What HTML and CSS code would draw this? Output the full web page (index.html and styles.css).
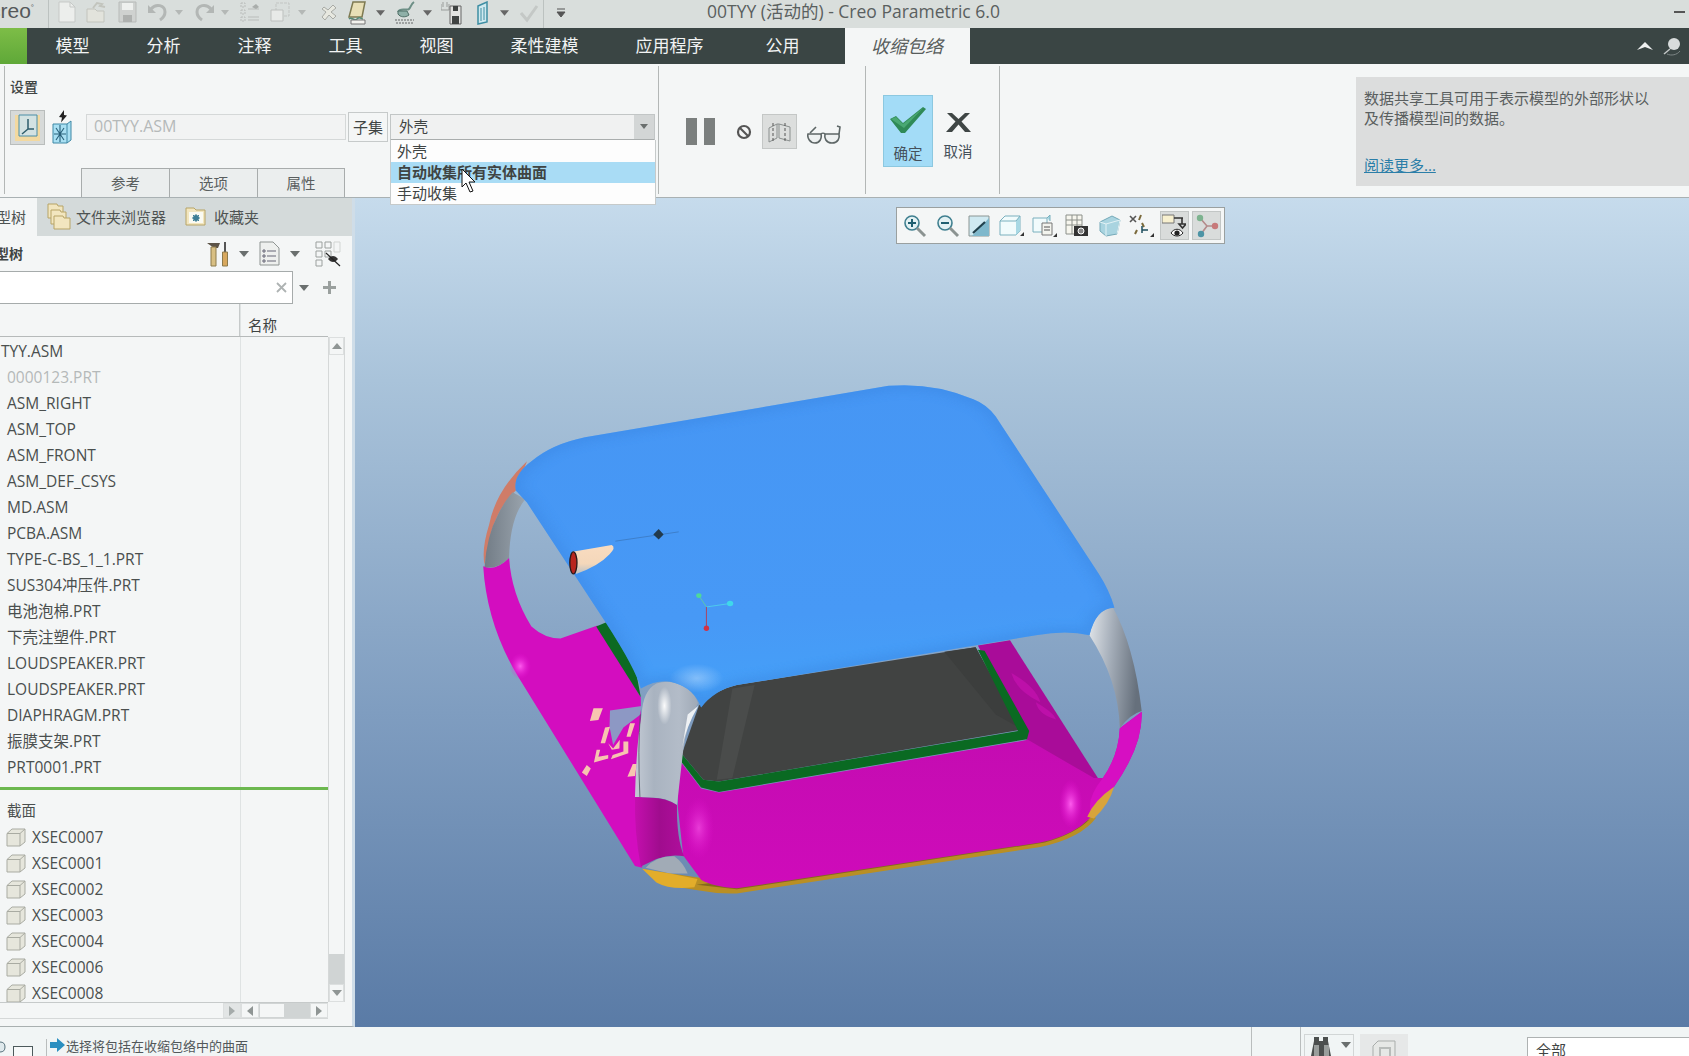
FILE: index.html
```html
<!DOCTYPE html>
<html lang="zh">
<head>
<meta charset="utf-8">
<title>00TYY (活动的) - Creo Parametric 6.0</title>
<link rel="stylesheet" href="styles.css">
</head>
<body>
<svg class="defs" width="0" height="0">
  <defs>
    <symbol id="arrow" viewBox="0 0 10 6"><path d="M0 0h10L5 6z" fill="currentColor"/></symbol>
    <symbol id="cube" viewBox="0 0 20 20">
      <path d="M1 6.500L6 2h13v13l-5 4H1z" fill="#e6e6dc" stroke="#a9aba2"/>
      <path d="M1 6.500h13V19M14 6.500L19 2" fill="none" stroke="#a9aba2"/>
    </symbol>
  </defs>
</svg>
<div class="app">
  <header class="titlebar">
    <span class="logo">creo<sup class="logo-mark">°</sup></span>
    <i class="vsep first"></i>
    <div class="quick">
      <svg width="28" height="24" viewBox="0 0 28 24"><path d="M1 1h11l5 5v15H1z" fill="#eceeec" stroke="#c6c9c7"/><path d="M12 1v5h5" fill="none" stroke="#c6c9c7"/></svg>
      <svg width="32" height="24" viewBox="0 0 32 24"><path d="M1 8h8l2 2h7v11H1z" fill="#e2e3dc" stroke="#c2c4bd"/><path d="M7 7l4-5 5 1-2 2 5 1" fill="none" stroke="#c2c4bd" stroke-width="2"/></svg>
      <svg width="29" height="24" viewBox="0 0 29 24"><path d="M1 1h17v20H1z" fill="#cfd2d0" stroke="#b8bbb9"/><path d="M4 2h11v7H4z" fill="#eef0ee"/><path d="M5 14h9v7H5z" fill="#aeb1af"/></svg>
      <svg width="28" height="24" viewBox="0 0 28 24"><path d="M4 8c5-6 14-4 14 3 0 3-2 6-5 8" fill="none" stroke="#b3b7b5" stroke-width="3"/><path d="M1 4v8h8z" fill="#b3b7b5"/></svg>
      <svg class="qarrow" width="20" height="24" viewBox="0 0 20 24"><use href="#arrow" x="0" y="9" width="8" height="5"/></svg>
      <svg width="26" height="24" viewBox="0 0 26 24"><path d="M16 8c-5-6-14-4-14 3 0 3 2 6 5 8" fill="none" stroke="#b3b7b5" stroke-width="3"/><path d="M19 4v8h-8z" fill="#b3b7b5"/></svg>
      <svg class="qarrow" width="19" height="24" viewBox="0 0 19 24"><use href="#arrow" x="0" y="9" width="8" height="5"/></svg>
      <svg width="29" height="24" viewBox="0 0 29 24"><g fill="none" stroke="#b9bcba"><path d="M1 2h4v4H1zM1 9h4v4H1zM1 16h4v4H1z" stroke-dasharray="2 1"/><path d="M8 8h11M8 16h11M8 19h11" /></g><path d="M12 6l4-3 3 3-3 2z" fill="#a9adab"/></svg>
      <svg width="29" height="24" viewBox="0 0 29 24"><path d="M7 2h13v13H7z" fill="none" stroke="#c2c5c3" stroke-dasharray="3 1"/><path d="M2 9h12v11H2z" fill="#e8eae8" stroke="#bdc0be"/></svg>
      <svg class="qarrow" width="23" height="24" viewBox="0 0 23 24"><use href="#arrow" x="0" y="9" width="8" height="5"/></svg>
      <svg width="26" height="24" viewBox="0 0 26 24"><path d="M3 6l4 3 5-5 3 3-5 4 5 4-3 3-4-4-4 5-3-3 4-5-4-3z" fill="#e7e8e0" stroke="#a8aaa5"/></svg>
      <svg width="29" height="24" viewBox="0 0 29 24"><path d="M6 1h12l-3 15H2z" fill="#e8dfb6" stroke="#7e7a52" stroke-width="1.500"/><path d="M2 18c3-3 5 3 8 0s4 0 6 0" fill="none" stroke="#558a77" stroke-width="1.500"/><path d="M4 19h14v4H4z" fill="#f3f3ee" stroke="#777"/></svg>
      <svg class="qarrow dark" width="19" height="24" viewBox="0 0 19 24"><use href="#arrow" x="0" y="9" width="9" height="6"/></svg>
      <svg width="28" height="24" viewBox="0 0 28 24"><path d="M3 11c2-5 9-1 11-3s2-5 5-7" fill="none" stroke="#6d8f86" stroke-width="2"/><path d="M3 10h9l2 4c-4 3-9 2-11-1z" fill="#8fb0a8" stroke="#4f6e66"/><path d="M0 19h19M1 22h18" stroke="#8a8f8d" stroke-width="1.500" stroke-dasharray="2 1"/></svg>
      <svg class="qarrow dark" width="18" height="24" viewBox="0 0 18 24"><use href="#arrow" x="0" y="9" width="9" height="6"/></svg>
      <svg width="33" height="24" viewBox="0 0 33 24"><path d="M0 3v6h8V3M2 1v5M6 1v5" fill="none" stroke="#9a9d9b"/><path d="M9 5h11v18H9z" fill="#e2e3e1" stroke="#666"/><path d="M12 5h5v5h-5zM11 15h7v8h-7z" fill="#3f4342"/></svg>
      <svg width="26" height="24" viewBox="0 0 26 24"><path d="M4 5l9-4v20l-9 2z" fill="#cfe9ef" stroke="#3e8ea3" stroke-width="1.500"/><path d="M7 7v13M10 6v13" stroke="#3e8ea3"/></svg>
      <svg class="qarrow dark" width="20" height="24" viewBox="0 0 20 24"><use href="#arrow" x="0" y="9" width="9" height="6"/></svg>
      <svg width="23" height="24" viewBox="0 0 23 24"><path d="M1 12l6 7L17 5" fill="none" stroke="#c4c8c6" stroke-width="3"/></svg>
      <i class="vsep"></i>
      <svg class="qmore" width="10" height="24" viewBox="0 0 10 24"><path d="M1 8h8M1 11h8l-4 5z" fill="#555" stroke="#555"/></svg>
    </div>
    <h1 class="wintitle">00TYY (活动的) - Creo Parametric 6.0</h1>
    <span class="minimize"></span>
  </header>

  <nav class="tabbar">
    <span class="file-tab"></span>
    <span class="tab">模型</span>
    <span class="tab">分析</span>
    <span class="tab">注释</span>
    <span class="tab">工具</span>
    <span class="tab">视图</span>
    <span class="tab">柔性建模</span>
    <span class="tab">应用程序</span>
    <span class="tab tab-util">公用</span>
    <span class="tab tab-active">收缩包络</span>
    <div class="tab-tools">
      <svg width="16" height="10" viewBox="0 0 16 10"><path d="M0 9L8 1l8 8-8-3z" fill="#eef0f0"/></svg>
      <svg width="22" height="24" viewBox="0 0 22 24"><circle cx="12" cy="10" r="6" fill="#d8dcdc"/><path d="M8 15l-6 5" stroke="#c2c7c7" stroke-width="1.500"/><path d="M5 20c4 2 10 1 13-3" fill="none" stroke="#7d8686"/></svg>
    </div>
  </nav>

  <section class="ribbon">
    <div class="group group-settings">
      <div class="group-title">设置</div>
      <div class="controls">
        <span class="toggle">
          <svg width="27" height="29" viewBox="0 0 27 29"><path d="M1 2h25v26H1z" fill="#f3d9a0"/><path d="M5 2h18v21H5z" fill="#d3e2e2" stroke="#4a8ea6"/><path d="M14 6v10M14 16h6M14 16l-6 5" fill="none" stroke="#2f5e6c" stroke-width="1.500"/></svg>
        </span>
        <svg class="solid-icon" width="20" height="34" viewBox="0 0 20 34"><path d="M1 14h14l4-3v19l-4 3H1z" fill="#a9e0f3" stroke="#3f88a5"/><path d="M15 14v19" stroke="#3f88a5"/><path d="M4 18l8 12M12 18l-8 12M8 15v17M2 24h12" stroke="#29617a" stroke-width="1.100"/><path d="M12 0l-5 7 3 .500-1 5 6-7-3-.500z" fill="#222"/></svg>
        <span class="field">00TYY.ASM</span>
        <span class="subset">子集</span>
        <span class="select">外壳<span class="select-btn"><svg width="8" height="5"><use href="#arrow" width="8" height="5"/></svg></span></span>
      </div>
      <div class="subtabs">
        <span class="subtab">参考</span>
        <span class="subtab">选项</span>
        <span class="subtab">属性</span>
      </div>
      <ul class="dropdown">
        <li>外壳</li>
        <li class="dd-on">自动收集所有实体曲面</li>
        <li>手动收集</li>
      </ul>
      <svg class="cursor" width="15" height="25" viewBox="0 0 15 25"><path d="M1 1v18l4-4 4 9 3-1-4-9h6z" fill="#fff" stroke="#111"/></svg>
    </div>

    <div class="group group-tools">
      <span class="pause"><i></i><i></i></span>
      <svg class="ban" width="16" height="16" viewBox="0 0 16 16"><circle cx="8" cy="8" r="6" fill="none" stroke="#555" stroke-width="2.200"/><path d="M4 4l8 8" stroke="#555" stroke-width="2.200"/></svg>
      <span class="preview-box">
        <svg width="28" height="24" viewBox="0 0 28 24"><g fill="none" stroke="#8a8f8e"><path d="M3 8l8-4v14l-8 4zM13 4l11 3v14l-11-3zM11 4l2 0"/><path d="M7 3v18M19 3v18" stroke="#555" stroke-dasharray="3 2"/></g></svg>
      </span>
      <svg class="glasses" width="35" height="19" viewBox="0 0 35 19"><g fill="#eef1f1" stroke="#5d6666" stroke-width="1.600"><path d="M1 9h13c1 4-1 9-6 9S0 13 1 9z"/><path d="M18 9h14c1 4-1 9-7 9s-8-5-7-9z"/></g><path d="M14 9c1-1 3-1 4 0M3 8l6-6M32 9l1-7-3-1" fill="none" stroke="#5d6666" stroke-width="1.600"/></svg>
    </div>

    <div class="group group-confirm">
      <button class="ok">
        <svg width="36" height="26" viewBox="0 0 36 26"><path d="M0 12l6-3 7 7L33 0l3 2-21 24h-4z" fill="#2f8a57"/><path d="M1 12l5-2 7 7L33 1 14 21z" fill="#49a873"/></svg>
        <span>确定</span>
      </button>
      <button class="cancel">
        <svg width="25" height="19" viewBox="0 0 25 19"><path d="M1 0h5l6.500 6L19 0h5l-8.500 8.500L25 19h-6l-6.500-7.500L6 19H0l9.500-10.500z" fill="#3f4645"/></svg>
        <span>取消</span>
      </button>
    </div>

    <div class="group group-info">
      <aside class="info">
        <p>数据共享工具可用于表示模型的外部形状以<br>及传播模型间的数据。</p>
        <a class="more">阅读更多...</a>
      </aside>
    </div>
  </section>

  <main class="main">
    <aside class="panel">
      <div class="panel-tabs">
        <span class="ptab ptab-active"><span class="clip-l">模型树</span></span>
        <span class="ptab">
          <svg width="24" height="30" viewBox="0 0 24 30"><g fill="#f2e6bf" stroke="#b7a467"><path d="M1 3h9l1 2h5v12H1z"/><path d="M4 9h9l1 2h5v12H4z"/><path d="M7 15h9l1 2h6v11H7z"/></g></svg>
          文件夹浏览器
        </span>
        <span class="ptab ptab-fav">
          <svg width="21" height="20" viewBox="0 0 21 20"><path d="M1 2h8l2 2h9v15H1z" fill="#f2e6bf" stroke="#b7a467"/><path d="M4 6h14v11H4z" fill="#fafaf2"/><circle cx="11" cy="12" r="3" fill="#3e7f96"/><path d="M11 8v8M7 12h8M8 9l6 6M14 9l-6 6" stroke="#3e7f96"/></svg>
          收藏夹
        </span>
      </div>
      <div class="tree-tools">
        <span class="tree-title"><span class="clip-l">模型树</span></span>
        <div class="tree-icons">
          <svg width="22" height="26" viewBox="0 0 22 26"><path d="M0 2h13l-2 5H7z" fill="#5c5347"/><path d="M4 6h5v19H4z" fill="#d8bf83" stroke="#8c7a4c"/><path d="M17 1h2v10h-2z" fill="#555"/><path d="M15.500 11h5v14h-5z" fill="#d8a85e" stroke="#8c7a4c"/></svg>
          <svg class="small" width="10" height="6"><use href="#arrow" width="10" height="6"/></svg>
          <svg width="21" height="25" viewBox="0 0 21 25"><path d="M1 1h13l6 6v17H1z" fill="#eef0ee" stroke="#8e9492"/><path d="M4 9h2v2H4zM8 10h9M4 14h2v2H4zM8 15h9M4 19h2v2H4zM8 20h9" fill="none" stroke="#667"/></svg>
          <svg class="small" width="10" height="6"><use href="#arrow" width="10" height="6"/></svg>
          <svg class="tree-vis" width="27" height="26" viewBox="0 0 27 26"><g fill="none" stroke="#9ba09e"><path d="M1 1h6v6H1zM1 10h6v6H1zM1 19h6v6H1zM10 10h6v6h-6zM10 1h6v6h-6z"/><path d="M19 1h6v10h-6z" stroke="#d2d5d3"/></g><path d="M13 18c3-4 7-4 10 0-3 4-7 4-10 0z" fill="#333"/><path d="M11 12l14 13" stroke="#222" stroke-width="1.200"/></svg>
        </div>
      </div>
      <div class="search-row">
        <div class="search"><svg width="11" height="11" viewBox="0 0 11 11"><path d="M1 1l9 9M10 1l-9 9" stroke="#aeb3b3" stroke-width="1.800"/></svg></div>
        <svg class="small" width="10" height="6"><use href="#arrow" width="10" height="6"/></svg>
        <svg class="plus" width="15" height="15" viewBox="0 0 15 15"><path d="M6 1h3v5h5v3H9v5H6V9H1V6h5z" fill="#9aa09e"/></svg>
      </div>
      <div class="tree">
        <div class="tree-main">
          <div class="tree-head"><span class="col-tree"></span><span class="col-name">名称</span></div>
          <ul class="rows">
            <li class="row row-first"><span>TYY.ASM</span></li>
            <li class="row row-dim"><span>0000123.PRT</span></li>
            <li class="row"><span>ASM_RIGHT</span></li>
            <li class="row"><span>ASM_TOP</span></li>
            <li class="row"><span>ASM_FRONT</span></li>
            <li class="row"><span>ASM_DEF_CSYS</span></li>
            <li class="row"><span>MD.ASM</span></li>
            <li class="row"><span>PCBA.ASM</span></li>
            <li class="row"><span>TYPE-C-BS_1_1.PRT</span></li>
            <li class="row"><span>SUS304冲压件.PRT</span></li>
            <li class="row"><span>电池泡棉.PRT</span></li>
            <li class="row"><span>下壳注塑件.PRT</span></li>
            <li class="row"><span>LOUDSPEAKER.PRT</span></li>
            <li class="row"><span>LOUDSPEAKER.PRT</span></li>
            <li class="row"><span>DIAPHRAGM.PRT</span></li>
            <li class="row"><span>振膜支架.PRT</span></li>
            <li class="row"><span>PRT0001.PRT</span></li>
            <li class="insert-line"></li>
            <li class="row row-sec"><span>截面</span></li>
            <li class="row row-x"><svg width="20" height="20"><use href="#cube"/></svg><span>XSEC0007</span></li>
            <li class="row row-x"><svg width="20" height="20"><use href="#cube"/></svg><span>XSEC0001</span></li>
            <li class="row row-x"><svg width="20" height="20"><use href="#cube"/></svg><span>XSEC0002</span></li>
            <li class="row row-x"><svg width="20" height="20"><use href="#cube"/></svg><span>XSEC0003</span></li>
            <li class="row row-x"><svg width="20" height="20"><use href="#cube"/></svg><span>XSEC0004</span></li>
            <li class="row row-x"><svg width="20" height="20"><use href="#cube"/></svg><span>XSEC0006</span></li>
            <li class="row row-x"><svg width="20" height="20"><use href="#cube"/></svg><span>XSEC0008</span></li>
          </ul>
        </div>
        <div class="vscroll">
          <span class="sbtn"><svg width="10" height="6" viewBox="0 0 10 6"><path d="M5 0l5 6H0z" fill="#8f9594"/></svg></span>
          <span class="vthumb"></span>
          <span class="vtrack"></span>
          <span class="sbtn"><svg width="10" height="6" viewBox="0 0 10 6"><path d="M0 0h10L5 6z" fill="#8f9594"/></svg></span>
        </div>
      </div>
      <div class="hscroll">
        <span class="hbtn hbtn-grey"><svg width="6" height="10" viewBox="0 0 6 10"><path d="M0 0l6 5-6 5z" fill="#a5abaa"/></svg></span>
        <span class="hbtn"><svg width="6" height="10" viewBox="0 0 6 10"><path d="M6 0L0 5l6 5z" fill="#8f9594"/></svg></span>
        <span class="hthumb"></span>
        <span class="htrack"></span>
        <span class="hbtn"><svg width="6" height="10" viewBox="0 0 6 10"><path d="M0 0l6 5-6 5z" fill="#8f9594"/></svg></span>
      </div>
    </aside>

    <section class="viewport">
      <div class="view-tools">
        <svg width="24" height="24" viewBox="0 0 24 24"><circle cx="9" cy="9" r="7" fill="#e3f1f3" stroke="#3f7f8f" stroke-width="1.600"/><path d="M5 9h8M9 5v8" stroke="#1f5f70" stroke-width="2"/><path d="M14 14l8 8" stroke="#8b9391" stroke-width="3"/></svg>
        <svg width="24" height="24" viewBox="0 0 24 24"><circle cx="9" cy="9" r="7" fill="#e3f1f3" stroke="#3f7f8f" stroke-width="1.600"/><path d="M5 9h8" stroke="#1f5f70" stroke-width="2"/><path d="M14 14l8 8" stroke="#8b9391" stroke-width="3"/></svg>
        <svg width="24" height="24" viewBox="0 0 24 24"><path d="M1 2h20v20H1z" fill="#cfe9f1" stroke="#8c9694"/><path d="M21 4v18H4z" fill="#7fb8cc"/><path d="M5 19L17 8" stroke="#20404c" stroke-width="2.200"/></svg>
        <svg width="26" height="24" viewBox="0 0 26 24"><path d="M1 7l5-5h15v15l-4 4H1z" fill="#f1fbfc" stroke="#7ab0be"/><path d="M17 7v14l4-4V2z" fill="#a8d8e4"/><path d="M1 7h16l4-5" fill="none" stroke="#7ab0be"/><path d="M25 18v4h-4z" fill="#333"/></svg>
        <svg width="26" height="24" viewBox="0 0 26 24"><path d="M1 4h14v14H1z" fill="#f1fbfc" stroke="#7ab0be"/><path d="M15 4l3-3v6" fill="#a8d8e4" stroke="#7ab0be"/><path d="M10 9h10v12H10z" fill="#f3f4ee" stroke="#777"/><path d="M12 13h6M12 16h6" stroke="#555"/><path d="M25 19v4h-4z" fill="#333"/></svg>
        <svg width="24" height="24" viewBox="0 0 24 24"><path d="M1 1h16v19H1zM1 6h16M1 11h16M7 1v19M12 1v19" fill="#f7f6ee" stroke="#8c908a"/><path d="M9 12h14v10H9z" fill="#333"/><circle cx="16" cy="17" r="3" fill="#888" stroke="#fff"/></svg>
        <svg width="24" height="24" viewBox="0 0 24 24"><path d="M2 8l12-6 8 4-3 14-11 2-6-5z" fill="#a9d4e0" stroke="#74a9b8"/><path d="M8 10l14-4-3 14M8 10l0 12M8 10L2 8" fill="none" stroke="#e3f2f5"/></svg>
        <svg width="26" height="24" viewBox="0 0 26 24"><path d="M1 2l6 6M7 2L1 8" stroke="#555" stroke-width="1.600"/><g stroke="#7b6a3c" stroke-width="2" fill="none"><path d="M12 1l-2 5M13 9l2 4M6 20l2-4"/></g><path d="M13 12v7M13 16h6" stroke="#1d4d5e" stroke-width="1.500"/><path d="M25 19v4h-4z" fill="#333"/></svg>
        <span class="vt-on"><svg width="24" height="24" viewBox="0 0 24 24"><path d="M0 1h12v8H0z" fill="#f7f0cf" stroke="#777"/><path d="M12 4h9M20 4v6M17 10h7l-3.500 4z" fill="none" stroke="#333" stroke-width="1.600"/><path d="M9 19c3-5 9-5 12 0-3 4-9 4-12 0z" fill="#fff" stroke="#222"/><circle cx="15" cy="19" r="2.600" fill="#222"/></svg></span>
        <span class="vt-on"><svg width="24" height="24" viewBox="0 0 24 24"><path d="M5 4l7 8-6 8M12 12h8" fill="none" stroke="#b48a8a" stroke-width="1.600"/><circle cx="5" cy="4" r="3.200" fill="#7db38f"/><circle cx="20" cy="12" r="3.200" fill="#c7797a"/><circle cx="6" cy="20" r="3.200" fill="#4d94a5"/></svg></span>
      </div>

      <svg class="model" viewBox="0 0 1568 1568" preserveAspectRatio="none">
        <defs>
          <linearGradient id="blue" x1="0" y1="0" x2="0.1" y2="1"><stop offset="0" stop-color="#4696f4"/><stop offset="0.75" stop-color="#4799f6"/><stop offset="1" stop-color="#45a0f8"/></linearGradient>
          <linearGradient id="pillar" x1="0" y1="0" x2="1" y2="0"><stop offset="0" stop-color="#c3cad4"/><stop offset=".3" stop-color="#a9b3c0"/><stop offset=".7" stop-color="#b3bcc8"/><stop offset="1" stop-color="#9fa9b6"/></linearGradient>
          <linearGradient id="pillarR" x1="0" y1="0" x2="1" y2="0.2"><stop offset="0" stop-color="#e2e6ea"/><stop offset=".45" stop-color="#a6afba"/><stop offset="1" stop-color="#66707c"/></linearGradient>
          <linearGradient id="pillarL" x1="0" y1="0" x2="1" y2="0"><stop offset="0" stop-color="#727c86"/><stop offset="1" stop-color="#9aa4ad"/></linearGradient>
          <linearGradient id="front" x1="0" y1="0" x2="0" y2="1"><stop offset="0" stop-color="#c20cb0"/><stop offset="1" stop-color="#cf0bba"/></linearGradient>
          <linearGradient id="under" x1="0" y1="0" x2="1" y2="0"><stop offset="0" stop-color="#c40fae"/><stop offset=".5" stop-color="#a00c8e"/><stop offset="1" stop-color="#b00e9c"/></linearGradient>
          <linearGradient id="cone" x1="0" y1="0" x2="0" y2="1"><stop offset="0" stop-color="#f9dcc0"/><stop offset=".65" stop-color="#f4d7ba"/><stop offset="1" stop-color="#b9c1c6"/></linearGradient>
          <radialGradient id="glow"><stop offset="0" stop-color="#fff" stop-opacity=".55"/><stop offset="1" stop-color="#fff" stop-opacity="0"/></radialGradient>
          <radialGradient id="glowW"><stop offset="0" stop-color="#fff" stop-opacity=".95"/><stop offset="1" stop-color="#fff" stop-opacity="0"/></radialGradient>
          <radialGradient id="glowMag"><stop offset="0" stop-color="#ff60f0" stop-opacity=".95"/><stop offset="1" stop-color="#e812d4" stop-opacity="0"/></radialGradient>
          <path id="topShape" d="M125 350 Q118 305 160 265 Q205 215 280 195 L960 46 Q1060 35 1150 85 Q1180 100 1200 135 L1430 590 Q1455 640 1466 690 Q1425 690 1410 770 Q1360 755 1290 770 L620 915 Q570 930 540 980 Q525 925 480 908 Q445 895 405 925 Q395 870 325 730 L150 385z"/>
          <clipPath id="topClip"><use href="#topShape"/></clipPath>
          <filter id="soft" x="-10%" y="-10%" width="120%" height="120%"><feGaussianBlur stdDeviation="14"/></filter>
        </defs>

        <!-- lower rim -->
        <path d="M410 1450 Q450 1500 540 1512 Q580 1522 620 1520 L1300 1385 Q1390 1360 1425 1300 L1400 1300 L620 1490z" fill="#b98f24"/>
        <path d="M530 1495 L620 1508 L1310 1372 Q1380 1345 1410 1305 L1310 1350 L620 1480z" fill="#84691c"/>

        <!-- left band -->
        <path d="M52 570 Q80 585 110 545 Q115 650 160 745 Q190 780 225 780 L308 742 L405 950 L408 1445 L392 1440 L130 890 Q60 740 52 570z" fill="#d30dbf"/>
        <path d="M65 450 Q80 350 150 265 L125 350 Q90 390 70 470 L55 565 Q48 520 65 450z" fill="#cf7c68"/>
        <path d="M118 355 L146 375 Q112 430 110 545 Q85 580 55 572 Q60 480 85 420 Q100 380 118 355z" fill="url(#pillarL)"/>

        <!-- far right wall of band -->
        <path d="M1160 800 L1232 785 L1430 1187 L1400 1200 L1272 1080z" fill="#a90c99"/>
        <path d="M1235 880 Q1290 920 1300 965 Q1245 930 1235 880z M1290 965 Q1330 995 1335 1015 Q1295 1000 1290 965z" fill="#bd10a9"/>

        <!-- dark interior -->
        <path d="M535 975 Q570 930 620 915 L1155 805 L1255 1045 L580 1195 L545 1190 L497 1115z" fill="#414342"/>
        <path d="M610 925 L660 915 L610 1185 L575 1190z" fill="#4a4c4b"/>
        <path d="M1085 818 L1155 805 L1255 1040 L1200 1000z" fill="#3c3e3d"/>

        <!-- green lips -->
        <path d="M305 745 L332 730 Q370 790 392 860 L405 950z" fill="#0c6a22"/>
        <path d="M342 742 Q378 800 398 880 L372 815z" fill="#3e4140"/>
        <path d="M497 1115 L545 1190 L580 1195 L1250 1048 L1160 812 L1175 815 L1275 1048 L1270 1072 L580 1225 L540 1212 L497 1140z" fill="#0a6a22"/>

        <!-- front face -->
        <path d="M490 1130 L540 1215 L580 1227 L1272 1074 L1420 1185 L1440 1185 Q1475 1120 1478 1040 L1527 992 Q1530 1090 1465 1210 Q1430 1285 1390 1325 Q1350 1360 1300 1372 L620 1505 Q565 1500 540 1480 L500 1410 L488 1270z" fill="url(#front)"/>
        <path d="M1440 1185 Q1475 1120 1478 1040 L1527 992 Q1530 1090 1465 1210 L1415 1290 Q1400 1250 1440 1185z" fill="#d60fc2"/>
        <path d="M1405 1297 Q1420 1250 1465 1210 Q1455 1260 1420 1302z" fill="#d9a43a"/>

        <!-- QR-style decals on the left band -->
        <path d="M336 989 L407 976 L403 1002 L366 1038 L343 1089 L335 1036z" fill="#8d98c4"/>
        <path d="M299 982 L320 982 L310 1016 L291 1019z M325 1038 L336 1036 L325 1084 L315 1084z M332 1084 L343 1099 L358 1074 L357 1099 L340 1103z M306 1103 L314 1103 L310 1123 L332 1118 L332 1128 L300 1140z M366 1079 L377 1079 L377 1113 L338 1130 L342 1118 L366 1108z M381 1026 L392 1026 L382 1065 L373 1065z M284 1147 L293 1157 L284 1179 L273 1169z M387 1144 L396 1144 L392 1179 L375 1181z" fill="#f7c4b0"/>

        <!-- front-left pillar -->
        <path d="M392 1240 Q395 1080 407 1000 Q410 930 440 910 Q475 895 510 925 Q528 945 533 967 Q505 1040 500 1104 L486 1263 Q460 1240 430 1242z" fill="url(#pillar)"/>
        <path d="M510 1000 L534 975 Q505 1040 498 1095z" fill="#eef1f4"/>
        <path d="M404 1000 Q398 1100 403 1240" fill="none" stroke="#4c5560" stroke-width="2"/>
        <ellipse cx="458" cy="975" rx="16" ry="55" fill="url(#glowW)"/>
        <path d="M392 1240 L430 1242 Q460 1242 486 1263 Q485 1360 502 1412 Q470 1405 440 1420 L405 1442 Q390 1340 392 1240z" fill="url(#under)"/>
        <path d="M416 1445 Q440 1410 480 1412 Q500 1430 510 1462 L470 1462z" fill="#a1abb6"/>
        <path d="M408 1448 L470 1462 L532 1478 L525 1502 Q470 1510 440 1488z" fill="#e3ad2a"/>

        <!-- right pillar -->
        <path d="M1410 770 Q1420 700 1462 688 Q1510 800 1527 990 Q1500 1000 1478 1040 Q1475 900 1410 770z" fill="url(#pillarR)"/>

        <!-- blue top -->
        <use href="#topShape" fill="url(#blue)"/>
        <g clip-path="url(#topClip)">
          <use href="#topShape" fill="none" stroke="#3a86e2" stroke-width="26" opacity=".55" filter="url(#soft)"/>
          <ellipse cx="530" cy="895" rx="60" ry="42" fill="url(#glow)" opacity=".6"/>
        </g>

        <!-- highlights -->
        <ellipse cx="135" cy="860" rx="24" ry="38" fill="url(#glowMag)"/>
        <ellipse cx="1368" cy="1260" rx="26" ry="70" fill="url(#glowMag)"/>
        <ellipse cx="535" cy="1330" rx="34" ry="90" fill="url(#glowMag)" opacity=".6"/>

        <!-- probe nose -->
        <path d="M348 497 L490 470" stroke="#3a78bf" stroke-width="2"/>
        <path d="M252 528 L340 508 Q350 515 335 535 Q310 570 260 592z" fill="url(#cone)"/>
        <ellipse cx="254" cy="560" rx="8" ry="32" fill="#b8261e" stroke="#2b1a1a" stroke-width="3"/>
        <path d="M445 462 L456 478 L445 492 L433 478z" fill="#223a4c"/>

        <!-- datum axes -->
        <path d="M552 688 L535 655" stroke="#5fd39a" stroke-width="2"/>
        <path d="M552 688 L605 678" stroke="#4fd8ea" stroke-width="2"/>
        <path d="M552 688 L552 750" stroke="#c2303e" stroke-width="2"/>
        <ellipse cx="535" cy="655" rx="6" ry="7" fill="#4fd89a"/>
        <ellipse cx="605" cy="678" rx="7" ry="8" fill="#3fd8ea"/>
        <ellipse cx="552" cy="750" rx="6" ry="8" fill="#d23245"/>
      </svg>
    </section>
  </main>

  <footer class="status">
    <svg class="st-edge" width="6" height="12" viewBox="0 0 6 12"><path d="M0 1q5 0 5 5t-5 5" fill="#dfe9ec" stroke="#56707a"/></svg>
    <span class="st-box"></span>
    <i class="st-sep"></i>
    <svg class="st-arrow" width="15" height="14" viewBox="0 0 15 14"><path d="M0 4h7V0l8 7-8 7v-4H0z" fill="#2b8fc0"/></svg>
    <span class="st-msg">选择将包括在收缩包络中的曲面</span>
    <div class="st-right">
      <i class="st-line"></i>
      <i class="st-line st-line2"></i>
      <span class="st-find">
        <svg width="22" height="22" viewBox="0 0 22 22"><path d="M3 3h5v4h4V3h5v4l3 15H0L3 7z" fill="#4c4f4e"/><path d="M3 11h5v11H3zM13 11h5v11h-5z" fill="#9a9e9c"/></svg>
        <svg class="small" width="10" height="6"><use href="#arrow" width="10" height="6"/></svg>
      </span>
      <span class="st-btn"><svg width="24" height="22" viewBox="0 0 24 22"><path d="M1 6l5-5h17v21H1z" fill="#e6e8e6" stroke="#a9adab"/><path d="M8 8h10v10H8z" fill="none" stroke="#b8bcba" stroke-width="2"/></svg></span>
      <span class="st-filter">全部</span>
    </div>
  </footer>
</div>
</body>
</html>
```

FILE: styles.css
```css
* { box-sizing: border-box; }
html, body { margin: 0; padding: 0; }
body {
  font-family: "Open Sans", "Noto Sans CJK SC", sans-serif;
  color: #3f4443;
  background: #f4f6f6;
}
.defs { position: absolute; }
ul { list-style: none; margin: 0; padding: 0; }
p { margin: 0; }
svg { display: block; flex: none; color: #6a6f6e; }

.app {
  width: 1689px;
  height: 1056px;
  overflow: hidden;
  display: flex;
  flex-direction: column;
}

/* Title bar */
.titlebar {
  height: 28px;
  flex: none;
  background: #d9dedc;
  display: flex;
  align-items: center;
  position: relative;
}
.logo {
  font-family: "Liberation Sans", sans-serif;
  font-size: 21px;
  line-height: 22px;
  color: #55595a;
  margin-left: -10px;
  width: 58px;
  flex: none;
  align-self: flex-start;
}
.logo-mark { font-size: 8px; vertical-align: 8px; line-height: 0; }
.vsep { width: 1px; height: 28px; background: #bcc2c0; flex: none; }
.vsep.first { margin-right: 9px; }
.quick { display: flex; align-items: center; margin-top: -3px; }
.quick .vsep { margin: 3px 12px 0 0; }
.qarrow { color: #b4b8b6; }
.qarrow.dark { color: #666; }
.wintitle {
  position: absolute;
  left: 707px;
  top: 0;
  margin: 0;
  font-size: 17.500px;
  font-weight: 400;
  line-height: 22px;
  color: #5a605f;
  white-space: nowrap;
}
.minimize {
  position: absolute;
  left: 1674px;
  top: 11px;
  width: 11px;
  height: 2px;
  background: #555;
}

/* Ribbon tabs */
.tabbar {
  height: 36px;
  flex: none;
  background: #3a4544;
  display: flex;
  align-items: stretch;
}
.file-tab {
  width: 27px;
  background: linear-gradient(#7dbd47, #5fa838);
}
.tab {
  padding: 0 28.500px;
  font-size: 17px;
  line-height: 36px;
  color: #f2f4f4;
  white-space: nowrap;
}
.tab-util { margin-left: 5px; padding-right: 0; }
.tab-active {
  margin-left: 45px;
  width: 125px;
  padding: 0;
  text-align: center;
  background: #f4f6f6;
  color: #585d5c;
  font-size: 18px;
  font-style: italic;
}
.tab-tools {
  margin-left: auto;
  padding-right: 5px;
  display: flex;
  align-items: center;
  gap: 9px;
}

/* Ribbon */
.ribbon {
  height: 134px;
  flex: none;
  background: #f4f6f6;
  border-bottom: 1px solid #a9b1b3;
  display: flex;
}
.group { position: relative; margin: 2px 0 3px; }
.group-settings {
  width: 655px;
  margin-left: 4px;
  border-left: 1px solid #b3b7b6;
  border-right: 1px solid #b3b7b6;
  padding: 13px 0 0 5px;
  display: flex;
  flex-direction: column;
}
.group-title { font-size: 14px; line-height: 15px; font-weight: 500; height: 29px; color: #3f4443; }
.controls { display: flex; align-items: center; height: 38px; }
.toggle {
  width: 35px;
  height: 35px;
  background: #d7dad9;
  border: 1px solid #b9bdbc;
  display: flex;
  align-items: center;
  justify-content: center;
}
.solid-icon { margin-left: 7px; }
.field {
  margin-left: 14px;
  width: 260px;
  height: 26px;
  border: 1px solid #d5d8d8;
  background: #f2f3f3;
  padding-left: 7px;
  font-size: 16px;
  line-height: 23px;
  color: #b5b9b9;
}
.subset {
  margin-left: 2px;
  width: 40px;
  height: 30px;
  border: 1px solid #c6caca;
  font-size: 15px;
  line-height: 28px;
  text-align: center;
}
.select {
  margin-left: 2px;
  width: 265px;
  height: 27px;
  border: 1px solid #c2c6c6;
  border-bottom: 2px solid #a9adad;
  background: #f0f1f1;
  padding-left: 8px;
  font-size: 14.500px;
  line-height: 24px;
  position: relative;
}
.select-btn {
  position: absolute;
  right: 0;
  top: 0;
  bottom: 0;
  width: 20px;
  background: #d3d6d6;
  display: flex;
  align-items: center;
  justify-content: center;
}
.subtabs { display: flex; margin: auto 0 -3px 71px; }
.subtab {
  width: 88px;
  height: 29px;
  border: 1px solid #a8acac;
  border-bottom: 0;
  border-right-width: 0;
  background: #ebeeee;
  text-align: center;
  font-size: 14.500px;
  line-height: 29px;
  color: #5a5f5f;
}
.subtab:last-child { border-right-width: 1px; }
.dropdown {
  position: absolute;
  left: 385px;
  top: 74px;
  width: 266px;
  height: 65px;
  background: #fdfdfd;
  border: 1px solid #c6caca;
  border-top: 0;
  padding-top: 1px;
  font-size: 15px;
  line-height: 21px;
  z-index: 3;
}
.dropdown li { padding-left: 6px; }
.dd-on { background: #a9dcf5; font-weight: 700; }
.cursor { position: absolute; left: 456px; top: 102px; z-index: 4; }

.group-tools {
  width: 207px;
  border-right: 1px solid #b3b7b6;
  padding: 3px 0 0 27px;
  display: flex;
  align-items: center;
}
.pause { display: flex; gap: 7px; }
.pause i { width: 11px; height: 27px; background: #7b7f7e; }
.ban { margin-left: 21px; }
.preview-box {
  margin-left: 10px;
  width: 35px;
  height: 35px;
  background: #dcdedd;
  border: 1px solid #c4c7c6;
  display: flex;
  align-items: center;
  justify-content: center;
}
.glasses { margin: 6px 0 0 10px; }

.group-confirm {
  width: 134px;
  border-right: 1px solid #b3b7b6;
  display: flex;
  align-items: flex-start;
  padding: 29px 0 0 17px;
}
.ok, .cancel {
  border: 0;
  background: none;
  padding: 0;
  font: inherit;
  font-size: 14.500px;
  color: #45505a;
  display: flex;
  flex-direction: column;
  align-items: center;
}
.ok {
  width: 50px;
  height: 72px;
  background: #a3dcf7;
  border: 1px solid #8cc8e0;
  padding-top: 11px;
  gap: 9px;
}
.cancel { width: 50px; padding-top: 18px; gap: 8px; }

.group-info { flex: 1; display: flex; justify-content: flex-end; align-items: flex-start; padding-top: 11px; }
.info {
  width: 333px;
  height: 109px;
  background: #dcdddd;
  padding: 11px 8px 0;
  font-size: 15px;
  line-height: 20px;
  color: #5a5f5f;
}
.more {
  display: block;
  margin-top: 27px;
  color: #2b7ea8;
  text-decoration: underline;
}

/* Main area */
.main { flex: 1; display: flex; min-height: 0; }

.panel {
  width: 355px;
  flex: none;
  background: #f4f6f6;
  border-right: 3px solid #cfdde8;
  border-bottom: 1px solid #a9b0b0;
  display: flex;
  flex-direction: column;
  overflow: hidden;
}
.panel-tabs {
  height: 38px;
  flex: none;
  background: #d4dada;
  display: flex;
  align-items: center;
  padding-bottom: 2px;
  font-size: 15px;
  color: #4e5352;
}
.ptab { display: flex; align-items: center; gap: 5px; height: 36px; padding-left: 10px; white-space: nowrap; }
.ptab-active { width: 37px; height: 38px; margin-bottom: -2px; background: #f4f6f6; padding: 0 0 2px; overflow: hidden; }
.ptab-fav { padding-left: 19px; gap: 8px; }
.clip-l { margin-left: -19px; white-space: nowrap; display: block; }

.tree-tools { height: 35px; flex: none; display: flex; align-items: center; }
.tree-title { width: 207px; flex: none; font-size: 14px; font-weight: 700; padding-bottom: 2px; overflow: hidden; }
.tree-icons {
  display: flex;
  align-items: center;
  gap: 10px;
}
.tree-vis { margin-left: 5px; }

.search-row { height: 33px; flex: none; display: flex; align-items: center; gap: 6px; }
.search {
  width: 293px;
  height: 33px;
  background: #fff;
  border: 1px solid #a6abab;
  border-left: 0;
  display: flex;
  align-items: center;
  justify-content: flex-end;
  padding-right: 5px;
}
.plus { margin-left: 7px; }

.tree { flex: 1; display: flex; min-height: 0; }
.tree-main {
  width: 328px;
  flex: none;
  overflow: hidden;
  background: linear-gradient(#dfe3e3, #dfe3e3) 240px 0 / 1px 100% no-repeat;
}
.tree-head {
  height: 33px;
  border-bottom: 1px solid #b6baba;
  display: flex;
  align-items: center;
}
.col-tree { width: 240px; height: 100%; border-right: 1px solid #c6caca; }
.col-name { padding: 8px 0 0 8px; font-size: 14.500px; }
.rows { font-size: 15.500px; color: #4a4f4e; padding-top: 1px; }
.row { height: 26px; line-height: 26px; padding-left: 7px; white-space: nowrap; display: flex; align-items: center; }
.row-first { padding-left: 1px; }
.row-dim { color: #b4b9b9; }
.insert-line { height: 3px; margin: 7px 0 8px; background: #6cb84f; }
.row-x { padding-left: 6px; gap: 6px; }
.row-sec { font-size: 14.500px; }

.vscroll {
  width: 17px;
  flex: none;
  margin-top: 33px;
  border: 1px solid #d5d8d8;
  border-width: 0 1px;
  display: flex;
  flex-direction: column;
}
.sbtn { height: 18px; flex: none; display: flex; align-items: center; justify-content: center; border: 1px solid #dcdfdf; }
.vthumb { flex: 1; background: #f4f6f6; }
.vtrack { height: 30px; flex: none; background: #d0d4d4; }

.hscroll {
  height: 17px;
  flex: none;
  margin-bottom: 7px;
  border-top: 1px solid #c6caca;
  border-bottom: 1px solid #d5d8d8;
  width: 328px;
  display: flex;
  padding-left: 223px;
}
.hbtn { width: 18px; display: flex; align-items: center; justify-content: center; border: 1px solid #dcdfdf; }
.hbtn-grey { background: #e2e5e5; }
.hthumb { width: 26px; border: 1px solid #d0d4d4; }
.htrack { width: 25px; background: #d0d4d4; }

/* Viewport */
.viewport {
  flex: 1;
  position: relative;
  overflow: hidden;
  background: linear-gradient(#c6dbec 0%, #a9c3da 22%, #7f9dc0 62%, #5a7ba6 100%);
}
.view-tools {
  position: absolute;
  left: 541px;
  top: 9px;
  width: 329px;
  height: 37px;
  background: #f4f6f6;
  border: 1px solid #9aa0a0;
  padding-left: 2px;
  display: grid;
  grid-template-columns: repeat(10, 32.400px);
  align-items: center;
  justify-items: center;
}
.vt-on {
  width: 29px;
  height: 29px;
  background: #d9dcdb;
  border: 1px solid #c2c6c5;
  display: flex;
  align-items: center;
  justify-content: center;
}
.model { position: absolute; left: 105px; top: 172px; width: 700px; height: 540px; }

/* Status bar */
.status {
  height: 29px;
  flex: none;
  background: #f1f5f5;
  display: flex;
  align-items: flex-start;
  position: relative;
  overflow: hidden;
}
.st-edge { margin-top: 14px; }
.st-box { width: 20px; height: 14px; margin: 19px 0 0 7px; background: #f7f9f9; border: 1px solid #4d5a5c; border-bottom: 0; }
.st-sep { width: 1px; height: 29px; margin: 12px 0 0 13px; background: #b9bdbd; }
.st-arrow { margin: 11px 0 0 3px; }
.st-msg { margin: 9px 0 0 1px; font-size: 13px; line-height: 20px; color: #52585a; }
.st-right { position: absolute; left: 1251px; top: 0; right: 0; height: 29px; display: flex; align-items: flex-start; }
.st-line { width: 1px; height: 29px; background: #b9bdbd; }
.st-line2 { margin-left: 48px; }
.st-find {
  margin: 7px 0 0 3px;
  width: 50px;
  height: 30px;
  border: 1px solid #d2d6d6;
  display: flex;
  align-items: center;
  gap: 8px;
  padding: 0 0 8px 6px;
}
.st-btn {
  margin: 7px 0 0 6px;
  width: 48px;
  height: 30px;
  background: #e6e8e8;
  display: flex;
  justify-content: center;
  padding-top: 6px;
}
.st-filter {
  margin: 10px 0 0 119px;
  width: 162px;
  height: 30px;
  background: #fff;
  border: 1px solid #aeb2b2;
  border-right: 0;
  padding-left: 8px;
  font-size: 15px;
  line-height: 24px;
}
```
